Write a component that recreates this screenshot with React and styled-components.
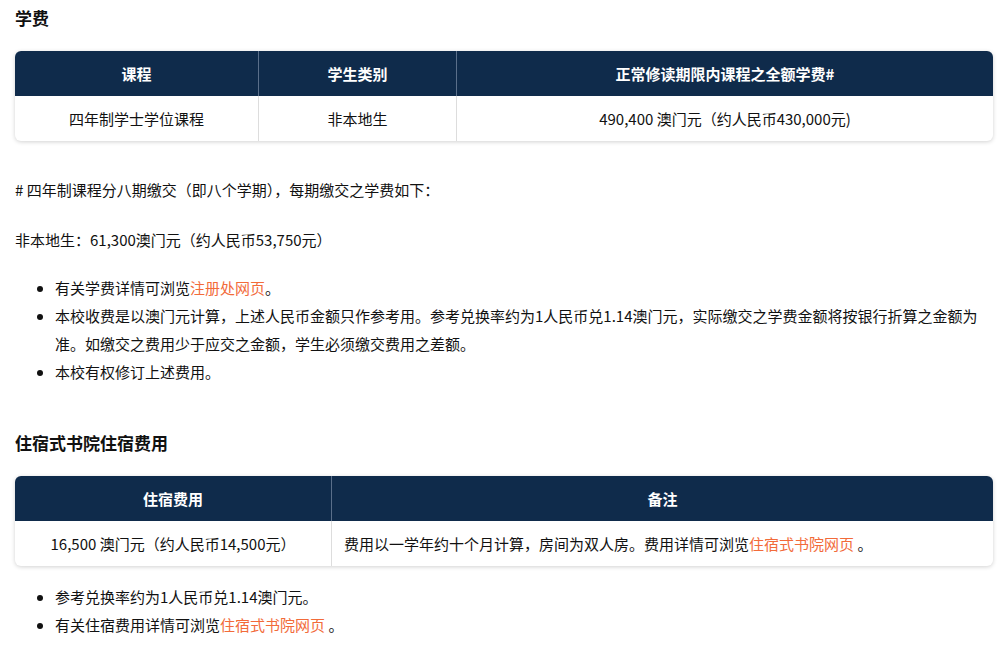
import React from "react";
import styled, { createGlobalStyle } from "styled-components";

const Global = createGlobalStyle`
  body {
    margin: 0;
    background: #fff;
    font-family: "Noto Sans CJK SC", "Liberation Sans", sans-serif;
    color: #111;
  }
`;

const Page = styled.div`
  padding: 0 12px 0 15px;
  font-size: 15px;
`;

const Heading = styled.h3`
  font-size: 17px;
  font-weight: bold;
  margin: 0;
  padding-top: ${(p) => p.$top}px;
  line-height: 24px;
  height: 24px;
`;

const Table = styled.table`
  width: 100%;
  border-collapse: separate;
  border-spacing: 0;
  border-radius: 6px;
  overflow: hidden;
  box-shadow: 0 1px 4px rgba(0, 0, 0, 0.18);
  margin-top: ${(p) => p.$top}px;
`;

const Th = styled.th`
  background: #0f2b4b;
  color: #fff;
  font-weight: bold;
  height: 45px;
  padding: 0;
  border-left: ${(p) => (p.$first ? "none" : "1px solid #5a6f8a")};
  width: ${(p) => p.$w || "auto"};
`;

const Td = styled.td`
  height: 45px;
  padding: 0 12px;
  text-align: ${(p) => (p.$left ? "left" : "center")};
  border-left: ${(p) => (p.$first ? "none" : "1px solid #ddd")};
`;

const Para = styled.p`
  margin: 0;
  line-height: 28px;
  margin-top: ${(p) => p.$top}px;
`;

const List = styled.ul`
  margin: ${(p) => p.$top}px 0 0;
  padding-left: 40px;
  line-height: 28px;
`;

const Link = styled.a`
  color: #f26b3a;
  text-decoration: none;
`;

export default function App() {
  return (
    <Page>
      <Global />
      <Heading $top={6}>学费</Heading>
      <Table $top={21}>
        <thead>
          <tr>
            <Th $first $w="243px">课程</Th>
            <Th $w="197px">学生类别</Th>
            <Th>正常修读期限内课程之全额学费#</Th>
          </tr>
        </thead>
        <tbody>
          <tr>
            <Td $first>四年制学士学位课程</Td>
            <Td>非本地生</Td>
            <Td>490,400 澳门元（约人民币430,000元)</Td>
          </tr>
        </tbody>
      </Table>
      <Para $top={35}># 四年制课程分八期缴交（即八个学期），每期缴交之学费如下：</Para>
      <Para $top={22}>非本地生：61,300澳门元（约人民币53,750元）</Para>
      <List $top={20}>
        <li>有关学费详情可浏览<Link href="#">注册处网页</Link>。</li>
        <li>本校收费是以澳门元计算，上述人民币金额只作参考用。参考兑换率约为1人民币兑1.14澳门元，实际缴交之学费金额将按银行折算之金额为准。如缴交之费用少于应交之金额，学生必须缴交费用之差额。</li>
        <li>本校有权修订上述费用。</li>
      </List>
      <Heading $top={45}>住宿式书院住宿费用</Heading>
      <Table $top={21}>
        <thead>
          <tr>
            <Th $first $w="316px">住宿费用</Th>
            <Th>备注</Th>
          </tr>
        </thead>
        <tbody>
          <tr>
            <Td $first>16,500 澳门元（约人民币14,500元）</Td>
            <Td $left>费用以一学年约十个月计算，房间为双人房。费用详情可浏览<Link href="#">住宿式书院网页</Link> 。</Td>
          </tr>
        </tbody>
      </Table>
      <List $top={17}>
        <li>参考兑换率约为1人民币兑1.14澳门元。</li>
        <li>有关住宿费用详情可浏览<Link href="#">住宿式书院网页</Link> 。</li>
      </List>
    </Page>
  );
}
